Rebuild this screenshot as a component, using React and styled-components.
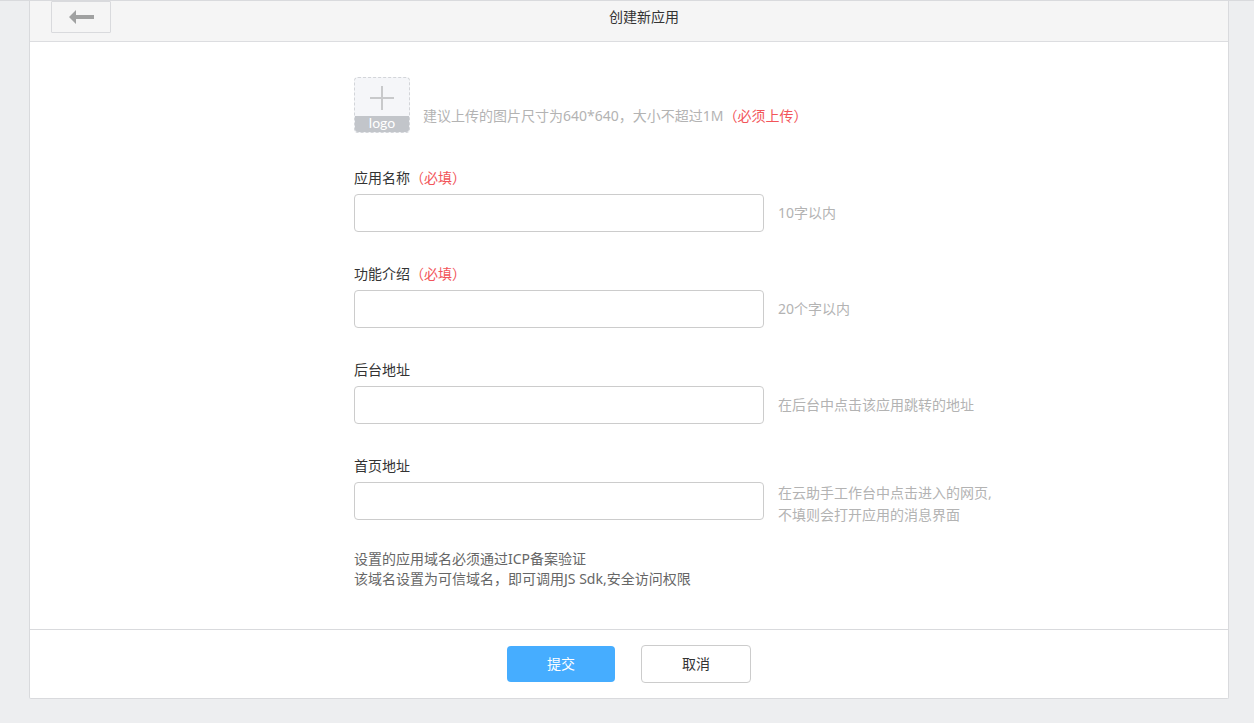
import React from 'react';
import styled, { createGlobalStyle } from 'styled-components';

const fields = [
  { id: 'name', label: '应用名称', required: true, hint: ['10字以内'] },
  { id: 'intro', label: '功能介绍', required: true, hint: ['20个字以内'] },
  { id: 'adminUrl', label: '后台地址', hint: ['在后台中点击该应用跳转的地址'] },
  {
    id: 'homeUrl',
    label: '首页地址',
    hint: ['在云助手工作台中点击进入的网页,', '不填则会打开应用的消息界面'],
  },
];

const App = () => {
  return (
    <>
      <GlobalStyle />
      <Page>
        <Card>
          <Header>
            <BackButton type="button" aria-label="返回">
              <svg width="26" height="14" viewBox="0 0 26 14">
                <path d="M1 7 L8 0 V5 H26 V9 H8 V14 Z" fill="#a0a1a1" />
              </svg>
            </BackButton>
            <Title>创建新应用</Title>
          </Header>
          <form onSubmit={(e) => e.preventDefault()}>
            <Fields>
              <UploadRow>
                <Upload>
                  <input type="file" accept="image/*" />
                  <svg width="24" height="24" viewBox="0 0 24 24">
                    <path d="M0 12 H24 M12 0 V24" stroke="#c8c9cb" strokeWidth="2" />
                  </svg>
                  <span>logo</span>
                </Upload>
                <UploadHint>
                  建议上传的图片尺寸为640*640，大小不超过1M<Required>（必须上传）</Required>
                </UploadHint>
              </UploadRow>
              {fields.map((field) => (
                <Field key={field.id}>
                  <label htmlFor={field.id}>
                    {field.label}
                    {field.required && <Required>（必填）</Required>}
                  </label>
                  <InputRow>
                    <Input id={field.id} type="text" />
                    <Hint $multi={field.hint.length > 1}>
                      {field.hint.map((line) => (
                        <div key={line}>{line}</div>
                      ))}
                    </Hint>
                  </InputRow>
                </Field>
              ))}
              <Notes>
                设置的应用域名必须通过ICP备案验证
                <br />
                该域名设置为可信域名，即可调用JS Sdk,安全访问权限
              </Notes>
            </Fields>
            <Footer>
              <SubmitButton type="submit">提交</SubmitButton>
              <CancelButton type="button">取消</CancelButton>
            </Footer>
          </form>
        </Card>
      </Page>
    </>
  );
};

const GlobalStyle = createGlobalStyle`
  *{
    box-sizing:border-box;
  }
  body{
    margin:0;
    background:#edeef0;
    color:#333;
    font:14px/20px "Noto Sans", "Noto Sans CJK SC", sans-serif;
  }
  button, input{
    font:inherit;
    color:inherit;
  }
`
const Page = styled.main`
  padding:0 25px 24px 29px;
  border-top:1px solid #d9dadd;
`
const Card = styled.div`
  background:white;
  border:1px solid #d9dadd;
  border-top:0;
  border-radius:0 0 2px 2px;
`
const Header = styled.header`
  display:flex;
  align-items:flex-start;
  height:41px;
  padding:0 51px 0 21px;
  background:#f5f5f5;
  border-bottom:1px solid #dcdde0;
`
const BackButton = styled.button`
  display:flex;
  align-items:center;
  justify-content:center;
  width:60px;
  height:32px;
  padding:0;
  background:transparent;
  border:1px solid #d9dadd;
  border-radius:1px;
  cursor:pointer;
`
const Title = styled.h1`
  flex:1;
  margin:0;
  font-size:14px;
  line-height:32px;
  font-weight:400;
  text-align:center;
`
const Fields = styled.div`
  width:550px;
  margin:0 auto;
  padding:35px 0 40px;
  white-space:nowrap;
`
const UploadRow = styled.div`
  display:flex;
  align-items:flex-end;
  gap:13px;
  margin-bottom:35px;
`
const Upload = styled.label`
  display:flex;
  flex-direction:column;
  align-items:center;
  justify-content:space-between;
  width:56px;
  height:56px;
  padding-top:8px;
  background:#f5f6f9;
  border:1px dashed #d3d5d9;
  border-radius:4px;
  overflow:hidden;
  cursor:pointer;
  input{
    display:none;
  }
  span{
    width:100%;
    height:16px;
    background:#c2c5ca;
    color:white;
    font-family:Lato, sans-serif;
    font-size:14px;
    line-height:14px;
    text-align:center;
  }
`
const UploadHint = styled.span`
  color:#b3b3b3;
  line-height:34px;
`
const Required = styled.span`
  color:#f2555a;
`
const Field = styled.div`
  & + &{
    margin-top:32px;
  }
  label{
    display:block;
    margin-bottom:6px;
  }
`
const InputRow = styled.div`
  display:flex;
  align-items:flex-start;
  gap:14px;
`
const Input = styled.input`
  flex:none;
  width:410px;
  height:38px;
  padding:0 10px;
  background:white;
  border:1px solid #ccc;
  border-radius:4px;
`
const Hint = styled.div`
  color:#b3b3b3;
  line-height:${(props) => (props.$multi ? '22px' : '38px')};
`
const Notes = styled.p`
  margin:23px 0 0;
  color:#666;
`
const Footer = styled.footer`
  display:flex;
  align-items:center;
  justify-content:center;
  gap:26px;
  padding:15px 0;
  border-top:1px solid #d9dadd;
`
const SubmitButton = styled.button`
  width:108px;
  height:36px;
  padding:0;
  background:#46adff;
  color:white;
  border:0;
  border-radius:4px;
  cursor:pointer;
`
const CancelButton = styled.button`
  width:110px;
  height:38px;
  padding:0;
  background:white;
  border:1px solid #ccc;
  border-radius:4px;
  cursor:pointer;
`
export default App
